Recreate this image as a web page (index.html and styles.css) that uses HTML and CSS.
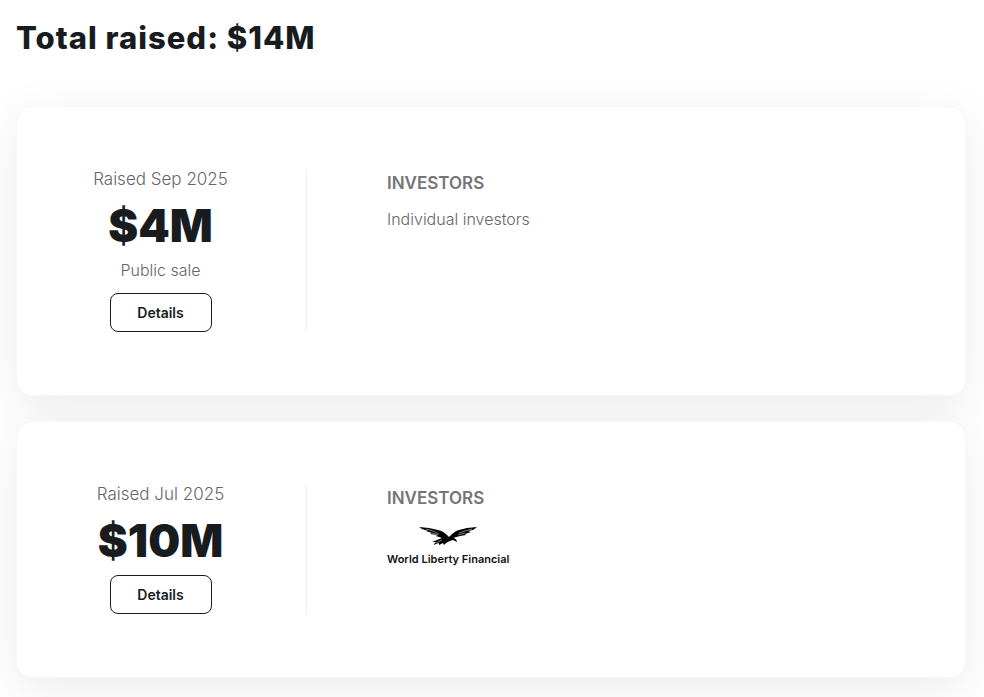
FILE: index.html
```html
<!DOCTYPE html>
<html lang="en">
<head>
    <meta charset="UTF-8">
    <meta name="viewport" content="width=device-width, initial-scale=1.0">
    <title>Total raised</title>
    <link rel="stylesheet" href="styles.css">
</head>
<body>
    <main class="funding">
        <h1 class="title">Total raised: $14M</h1>

        <section class="round">
            <div class="summary">
                <div class="date">Raised Sep 2025</div>
                <div class="amount">$4M</div>
                <div class="type">Public sale</div>
                <button class="button" type="button">Details</button>
            </div>
            <div class="investors">
                <h2 class="label">INVESTORS</h2>
                <p class="text">Individual investors</p>
            </div>
        </section>

        <section class="round">
            <div class="summary">
                <div class="date">Raised Jul 2025</div>
                <div class="amount">$10M</div>
                <button class="button" type="button">Details</button>
            </div>
            <div class="investors">
                <h2 class="label">INVESTORS</h2>
                <div class="investor">
                    <svg class="eagle" viewBox="0 0 58 20" aria-hidden="true">
                        <path d="M0 1 L10 2 L19 4 C24 5 27 8 30 11 C33 8 36 5 40 4 L48 2 L58 1 L54 4 L49 5 L52 6 L46 8 L47 9 L41 10 L34 12 C36 12 38 14 38 16 L34 14 C30 15 28 16 25 19 L24 17 L20 19 L20 17 L14 19 L17 16 L13 16 L23 12 L17 10 L18 9 L11 8 L13 7 L7 5 L9 5 L3 3 Z"/>
                        <path class="feather" d="M7 3 L14 5 L20 8 M13 7 L19 9 M40 7 L46 5 L53 3 M39 9 L46 7 M17 17 L23 14"/>
                    </svg>
                    <span class="investor-name">World Liberty Financial</span>
                </div>
            </div>
        </section>
    </main>
</body>
</html>
```

FILE: styles.css
```css
body {
    margin: 0;
    font-family: Inter, "Liberation Sans", sans-serif;
    background: #fff;
    color: #181c1f;
}

.funding {
    padding: 16px 18px 20px 16px;
}

.title {
    margin: 0 0 46px;
    font-size: 31px;
    line-height: 44px;
    font-weight: 800;
    letter-spacing: 1px;
}

.round {
    display: flex;
    margin-bottom: 25px;
    padding: 62px 0 63px;
    background: #fff;
    border: 1px solid #f7f7f7;
    border-radius: 16px;
    box-shadow: 0 12px 50px rgba(0, 0, 0, 0.08);
}

.summary {
    width: 290px;
    box-sizing: border-box;
    padding-right: 2px;
    display: flex;
    flex-direction: column;
    align-items: center;
    border-right: 1px solid #f2f2f2;
    color: #666;
}

.date {
    font-size: 17px;
    line-height: 20px;
    font-weight: 300;
}

.amount {
    margin: 10px 0 7px;
    font-size: 45px;
    line-height: 54px;
    font-weight: 900;
    color: #181c1f;
}

.type {
    margin-bottom: 13px;
    font-size: 16px;
    line-height: 20px;
    font-weight: 300;
}

.button {
    width: 102px;
    height: 39px;
    padding: 0;
    background: #fff;
    border: 1px solid #181c1f;
    border-radius: 8px;
    font-family: inherit;
    font-size: 14px;
    font-weight: 600;
    color: #181c1f;
    cursor: pointer;
}

.investors {
    flex: 1;
    padding-left: 80px;
    color: #666;
}

.label {
    margin: 2px 0 14px;
    font-size: 17px;
    line-height: 24px;
    font-weight: 600;
    color: #757575;
}

.text {
    margin: 0;
    font-size: 16px;
    line-height: 20px;
    font-weight: 300;
}

.investor {
    display: inline-flex;
    flex-direction: column;
    align-items: center;
    color: #111;
}

.eagle {
    display: block;
    width: 58px;
    height: 20px;
    margin-top: 2px;
}

.feather {
    fill: none;
    stroke: #fff;
    stroke-width: 0.5;
}

.investor-name {
    margin-top: 6px;
    font-size: 11px;
    line-height: 14px;
    font-weight: 600;
}
```
